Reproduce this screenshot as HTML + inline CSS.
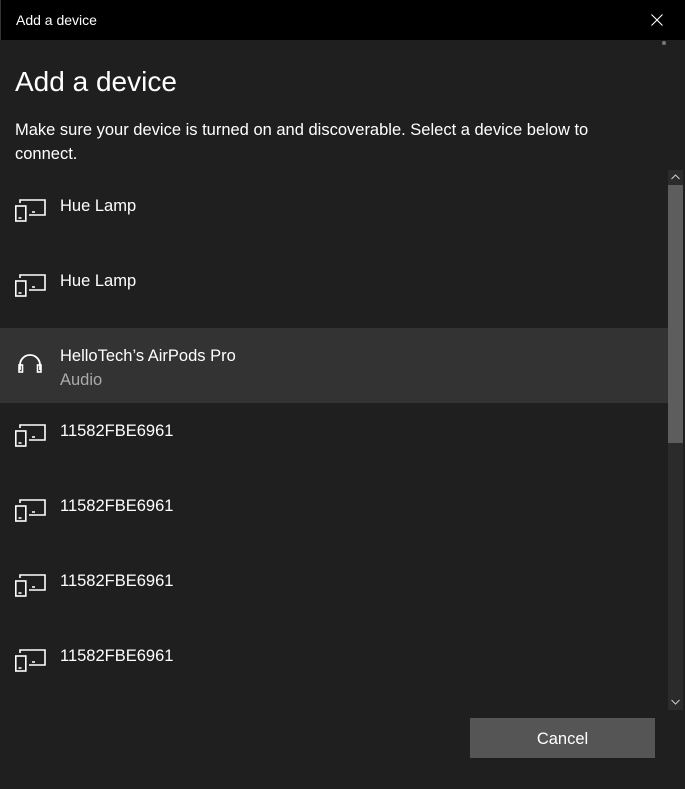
<!DOCTYPE html>
<html><head><style>
body{margin:0;width:685px;height:789px;background:#1f1f1f;font-family:"Liberation Sans",sans-serif;color:#fff;position:relative;overflow:hidden}
.tb{position:absolute;left:0;top:0;width:685px;height:40px;background:#000;border-left:1px solid #333;box-sizing:border-box}
.tb span{position:absolute;left:15px;top:12px;font-size:14px}
h1{position:absolute;left:15px;top:66px;margin:0;font-weight:normal;font-size:28px}
.desc{position:absolute;left:15px;top:118px;width:610px;font-size:16.5px;line-height:24px}
.row{position:absolute;left:0;width:668px;height:75px}
.row .t{position:absolute;left:60px;top:19px;font-size:16.5px}
.row .s{position:absolute;left:60px;top:43px;font-size:16.5px;color:#aaa}
.row svg{position:absolute;left:14px;top:13px}
.sel{background:#333}
.track{position:absolute;left:668px;top:170px;width:15px;height:540px;background:#2b2b2b}
.thumb{position:absolute;left:668px;top:185px;width:15px;height:258px;background:#5d5d5d}
.btn{position:absolute;left:470px;top:718px;width:185px;height:40px;background:#555;font-size:16.5px;text-align:center;line-height:42px}
</style></head><body>
<div class="tb"><span>Add a device</span>
<svg style="position:absolute;left:650px;top:14px" width="12" height="12"><path d="M0.5 0.5L11.5 11.5M11.5 0.5L0.5 11.5" stroke="#fff" stroke-width="1.1"/></svg></div>
<div style="position:absolute;left:662px;top:41px;width:4px;height:4px;border-radius:2px;background:#777"></div>
<h1>Add a device</h1>
<div class="desc">Make sure your device is turned on and discoverable. Select a device below to connect.</div>

<div class="row" style="top:178px"><svg width="34" height="34" viewBox="0 0 34 34"><path d="M6 12V9h25v15H15" fill="none" stroke="#fff" stroke-width="1.6"/><rect x="1.8" y="15" width="10" height="15" fill="none" stroke="#fff" stroke-width="1.6"/><path d="M4.5 27h3M18 21h3" stroke="#fff" stroke-width="1.6"/></svg><div class="t">Hue Lamp</div></div>
<div class="row" style="top:253px"><svg width="34" height="34" viewBox="0 0 34 34"><path d="M6 12V9h25v15H15" fill="none" stroke="#fff" stroke-width="1.6"/><rect x="1.8" y="15" width="10" height="15" fill="none" stroke="#fff" stroke-width="1.6"/><path d="M4.5 27h3M18 21h3" stroke="#fff" stroke-width="1.6"/></svg><div class="t">Hue Lamp</div></div>
<div class="row sel" style="top:328px"><svg width="34" height="34" viewBox="0 0 34 34" style="top:18px"><path d="M6 24V19a10 10 0 0 1 20 0V24" fill="none" stroke="#fff" stroke-width="1.8"/><rect x="5" y="19" width="3.5" height="7" fill="none" stroke="#fff" stroke-width="1.6"/><rect x="23.5" y="19" width="3.5" height="7" fill="none" stroke="#fff" stroke-width="1.6"/></svg><div class="t">HelloTech’s AirPods Pro</div><div class="s">Audio</div></div>
<div class="row" style="top:403px"><svg width="34" height="34" viewBox="0 0 34 34"><path d="M6 12V9h25v15H15" fill="none" stroke="#fff" stroke-width="1.6"/><rect x="1.8" y="15" width="10" height="15" fill="none" stroke="#fff" stroke-width="1.6"/><path d="M4.5 27h3M18 21h3" stroke="#fff" stroke-width="1.6"/></svg><div class="t">11582FBE6961</div></div>
<div class="row" style="top:478px"><svg width="34" height="34" viewBox="0 0 34 34"><path d="M6 12V9h25v15H15" fill="none" stroke="#fff" stroke-width="1.6"/><rect x="1.8" y="15" width="10" height="15" fill="none" stroke="#fff" stroke-width="1.6"/><path d="M4.5 27h3M18 21h3" stroke="#fff" stroke-width="1.6"/></svg><div class="t">11582FBE6961</div></div>
<div class="row" style="top:553px"><svg width="34" height="34" viewBox="0 0 34 34"><path d="M6 12V9h25v15H15" fill="none" stroke="#fff" stroke-width="1.6"/><rect x="1.8" y="15" width="10" height="15" fill="none" stroke="#fff" stroke-width="1.6"/><path d="M4.5 27h3M18 21h3" stroke="#fff" stroke-width="1.6"/></svg><div class="t">11582FBE6961</div></div>
<div class="row" style="top:628px"><svg width="34" height="34" viewBox="0 0 34 34"><path d="M6 12V9h25v15H15" fill="none" stroke="#fff" stroke-width="1.6"/><rect x="1.8" y="15" width="10" height="15" fill="none" stroke="#fff" stroke-width="1.6"/><path d="M4.5 27h3M18 21h3" stroke="#fff" stroke-width="1.6"/></svg><div class="t">11582FBE6961</div></div>

<div class="track"></div>
<div class="thumb"></div>
<svg style="position:absolute;left:671px;top:174px" width="9" height="6"><path d="M0.5 5L4.5 1L8.5 5" fill="none" stroke="#ccc" stroke-width="1"/></svg>
<svg style="position:absolute;left:671px;top:699px" width="9" height="6"><path d="M0.5 1L4.5 5L8.5 1" fill="none" stroke="#ccc" stroke-width="1"/></svg>
<div class="btn">Cancel</div>
</body></html>
